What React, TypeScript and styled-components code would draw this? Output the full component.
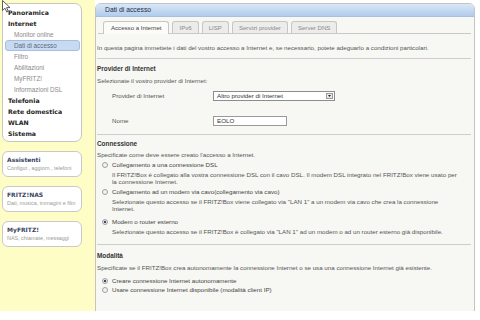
import styled, { createGlobalStyle } from "styled-components";

const GlobalStyle = createGlobalStyle`
  html, body {
    margin: 0;
    padding: 0;
    background: #fff;
  }
  body {
    font-family: "Liberation Sans", Arial, sans-serif;
    color: #555;
  }
`;

const Page = styled.div`
  position: relative;
  display: flex;
  width: 480px;
  height: 311px;
  overflow: hidden;
`;

const Cursor = styled.svg`
  position: absolute;
  left: 2px;
  top: 0;
`;

const Sidebar = styled.aside`
  flex: 0 0 95px;
  box-sizing: border-box;
  background: #fefdc6;
  padding: 3px 0 0 2px;
  display: flex;
  flex-direction: column;
  gap: 9px;
`;

const NavBox = styled.nav`
  width: 80px;
  box-sizing: border-box;
  background: #fff;
  border: 1px solid #c6c6c6;
  border-radius: 7px;
  padding: 2.5px 1px 2px 2px;
`;

const NavItem = styled.div<{ $sub?: boolean; $active?: boolean }>`
  height: 11px;
  line-height: ${(p) => (p.$active ? "9px" : "11px")};
  box-sizing: border-box;
  white-space: nowrap;
  padding-left: ${(p) => (p.$sub ? "9px" : "3px")};
  font-family: ${(p) =>
    p.$sub ? `"Liberation Sans", Arial, sans-serif` : `"DejaVu Sans", Verdana, sans-serif`};
  font-size: ${(p) => (p.$sub ? "6.3px" : "6.2px")};
  font-weight: ${(p) => (p.$sub ? 400 : 700)};
  color: ${(p) => (p.$sub ? "#8a8a8a" : "#262626")};
  ${(p) =>
    p.$active &&
    `
    background: #c8daf1;
    border: 1px solid #a5bfe2;
    border-radius: 3px;
    padding-left: 8px;
    color: #5a6a80;
  `}
`;

const SideCard = styled.div`
  width: 80px;
  height: 26px;
  box-sizing: border-box;
  background: #fff;
  border: 1px solid #c9c9c9;
  border-radius: 6px;
  padding: 3px 0 0 4px;
`;

const CardTitle = styled.div`
  font-family: "DejaVu Sans", Verdana, sans-serif;
  font-size: 6px;
  font-weight: 700;
  line-height: 9px;
  color: #3a4560;
`;

const CardSub = styled.div`
  font-size: 5.4px;
  line-height: 9px;
  color: #9a9a9a;
  white-space: nowrap;
`;

const Main = styled.main`
  flex: 1;
  padding-top: 3px;
`;

const Panel = styled.section`
  width: 380px;
  height: 330px;
  box-sizing: border-box;
  background: #f7f7f3;
  border: 1px solid #c4c4c4;
  border-radius: 6px 6px 0 0;
`;

const PanelHeader = styled.header`
  height: 12px;
  line-height: 12px;
  padding-left: 9px;
  background: linear-gradient(#d9e7f7, #b2ccec);
  border-bottom: 1px solid #a6c0e0;
  border-radius: 5px 5px 0 0;
  font-size: 6.8px;
  color: #1d2c48;
`;

const TabBar = styled.div`
  display: flex;
  gap: 3px;
  margin: 0 3px 0 2px;
  padding: 4px 0 0 5px;
  border-bottom: 1px solid #c9c9c9;
`;

const Tab = styled.div<{ $active?: boolean }>`
  height: ${(p) => (p.$active ? "13px" : "12px")};
  box-sizing: border-box;
  padding: 0 ${(p) => (p.$active ? "7px" : "6px")};
  line-height: 11px;
  font-size: 6.1px;
  white-space: nowrap;
  border: 1px solid #c6c6c6;
  border-bottom: none;
  border-radius: 3px 3px 0 0;
  background: ${(p) => (p.$active ? "#fbfbf8" : "#ececea")};
  color: ${(p) => (p.$active ? "#444" : "#8a8a8a")};
  margin-bottom: ${(p) => (p.$active ? "-1px" : "0")};
`;

const Content = styled.div`
  padding: 0 3px 0 1px;
  font-size: 6.2px;
  line-height: 8px;
`;

const Text = styled.div<{ $mt?: number }>`
  margin-top: ${(p) => p.$mt ?? 0}px;
  white-space: nowrap;
`;

const Heading = styled.div<{ $mt?: number }>`
  margin-top: ${(p) => p.$mt ?? 0}px;
  font-weight: 700;
  font-size: 6.4px;
  color: #333;
`;

const Divider = styled.hr<{ $mt?: number }>`
  margin: ${(p) => p.$mt ?? 0}px 0 0;
  border: none;
  border-top: 1px solid #cdcdcd;
  height: 0;
`;

const FieldRow = styled.div<{ $mt?: number }>`
  display: grid;
  grid-template-columns: 101px auto;
  align-items: center;
  margin-top: ${(p) => p.$mt ?? 0}px;
  padding-left: 15px;
`;

const Select = styled.div`
  display: flex;
  width: 122px;
  height: 10px;
  box-sizing: border-box;
  background: #fff;
  border: 1px solid #8d8d8d;
  line-height: 8px;
  color: #333;
`;

const SelectValue = styled.span`
  flex: 1;
  padding-left: 3px;
`;

const SelectButton = styled.span`
  width: 7px;
  margin: 1px;
  box-sizing: border-box;
  border: 1px solid #9a9a9a;
  background: #e8e8e8;
  display: flex;
  align-items: center;
  justify-content: center;
`;

const Input = styled.div`
  width: 74px;
  height: 10px;
  box-sizing: border-box;
  background: #fff;
  border: 1px solid #9a9a9a;
  padding-left: 3px;
  line-height: 8px;
  color: #333;
`;

const Option = styled.div<{ $mt?: number }>`
  display: flex;
  align-items: center;
  gap: 4px;
  margin-top: ${(p) => p.$mt ?? 0}px;
  padding-left: 5px;
  white-space: nowrap;
  color: #444;
`;

const Radio = styled.span<{ $checked?: boolean }>`
  width: 6px;
  height: 6px;
  box-sizing: border-box;
  border-radius: 50%;
  border: 1px solid #a0a0a0;
  background: ${(p) =>
    p.$checked ? "radial-gradient(circle, #3a4a60 0 1.3px, #e9eef4 1.6px)" : "#f2f2f2"};
`;

const Desc = styled.div<{ $mt?: number }>`
  margin-top: ${(p) => p.$mt ?? 0}px;
  padding-left: 15px;
  line-height: 7px;
  white-space: nowrap;
`;

const navItems: { label: string; sub?: boolean; active?: boolean }[] = [
  { label: "Panoramica" },
  { label: "Internet" },
  { label: "Monitor online", sub: true },
  { label: "Dati di accesso", sub: true, active: true },
  { label: "Filtro", sub: true },
  { label: "Abilitazioni", sub: true },
  { label: "MyFRITZ!", sub: true },
  { label: "Informazioni DSL", sub: true },
  { label: "Telefonia" },
  { label: "Rete domestica" },
  { label: "WLAN" },
  { label: "Sistema" },
];

const cards = [
  { title: "Assistenti", sub: "Configur., aggiorn., telefoni" },
  { title: "FRITZ!NAS", sub: "Dati, musica, immagini e film" },
  { title: "MyFRITZ!", sub: "NAS, chiamate, messaggi" },
];

const tabs = ["Accesso a Internet", "IPv6", "LISP", "Servizi provider", "Server DNS"];

const App = () => (
  <>
    <GlobalStyle />
    <Page>
      <Sidebar>
        <NavBox>
          {navItems.map((item) => (
            <NavItem key={item.label} $sub={item.sub} $active={item.active}>
              {item.label}
            </NavItem>
          ))}
        </NavBox>
        {cards.map((card) => (
          <SideCard key={card.title}>
            <CardTitle>{card.title}</CardTitle>
            <CardSub>{card.sub}</CardSub>
          </SideCard>
        ))}
      </Sidebar>

      <Main>
        <Panel>
          <PanelHeader>Dati di accesso</PanelHeader>
          <TabBar>
            {tabs.map((tab, i) => (
              <Tab key={tab} $active={i === 0}>
                {tab}
              </Tab>
            ))}
          </TabBar>

          <Content>
            <Text $mt={10}>
              In questa pagina immettete i dati del vostro accesso a Internet e, se necessario,
              potete adeguarlo a condizioni particolari.
            </Text>
            <Divider $mt={6} />

            <Heading $mt={6}>Provider di Internet</Heading>
            <Text $mt={4}>Selezionate il vostro provider di Internet:</Text>
            <FieldRow $mt={6}>
              <span>Provider di Internet</span>
              <Select>
                <SelectValue>Altro provider di Internet</SelectValue>
                <SelectButton>
                  <svg width="3" height="2" viewBox="0 0 3 2">
                    <path d="M0 0h3L1.5 2z" fill="#222" />
                  </svg>
                </SelectButton>
              </Select>
            </FieldRow>
            <FieldRow $mt={15}>
              <span>Nome</span>
              <Input>EOLO</Input>
            </FieldRow>
            <Divider $mt={8} />

            <Heading $mt={5}>Connessione</Heading>
            <Text $mt={3}>Specificate come deve essere creato l'accesso a Internet.</Text>
            <Option $mt={2}>
              <Radio />
              Collegamento a una connessione DSL
            </Option>
            <Desc $mt={2}>
              Il FRITZ!Box è collegato alla vostra connessione DSL con il cavo DSL. Il modem DSL
              integrato nel FRITZ!Box viene usato per
              <br />
              la connessione Internet.
            </Desc>
            <Option $mt={3}>
              <Radio />
              Collegamento ad un modem via cavo(collegamento via cavo)
            </Option>
            <Desc $mt={2}>
              Selezionate questo accesso se il FRITZ!Box viene collegato via "LAN 1" a un modem
              via cavo che crea la connessione
              <br />
              Internet.
            </Desc>
            <Option $mt={6}>
              <Radio $checked />
              Modem o router esterno
            </Option>
            <Desc $mt={2}>
              Selezionate questo accesso se il FRITZ!Box è collegato via "LAN 1" ad un modem o ad
              un router esterno già disponibile.
            </Desc>
            <Divider $mt={9} />

            <Heading $mt={7}>Modalità</Heading>
            <Text $mt={4}>
              Specificate se il FRITZ!Box crea autonomamente la connessione Internet o se usa una
              connessione Internet già esistente.
            </Text>
            <Option $mt={5}>
              <Radio $checked />
              Creare connessione Internet autonomamente
            </Option>
            <Option $mt={1}>
              <Radio />
              Usare connessione Internet disponibile (modalità client IP)
            </Option>
          </Content>
        </Panel>
      </Main>

      <Cursor width="9" height="13" viewBox="0 0 9 13">
        <path
          d="M0.5 0.5 L0.5 10.5 L3 8.2 L4.8 12 L6.3 11.3 L4.6 7.6 L8 7.6 Z"
          fill="#fff"
          stroke="#333"
          strokeWidth="0.8"
        />
      </Cursor>
    </Page>
  </>
);

export default App;
